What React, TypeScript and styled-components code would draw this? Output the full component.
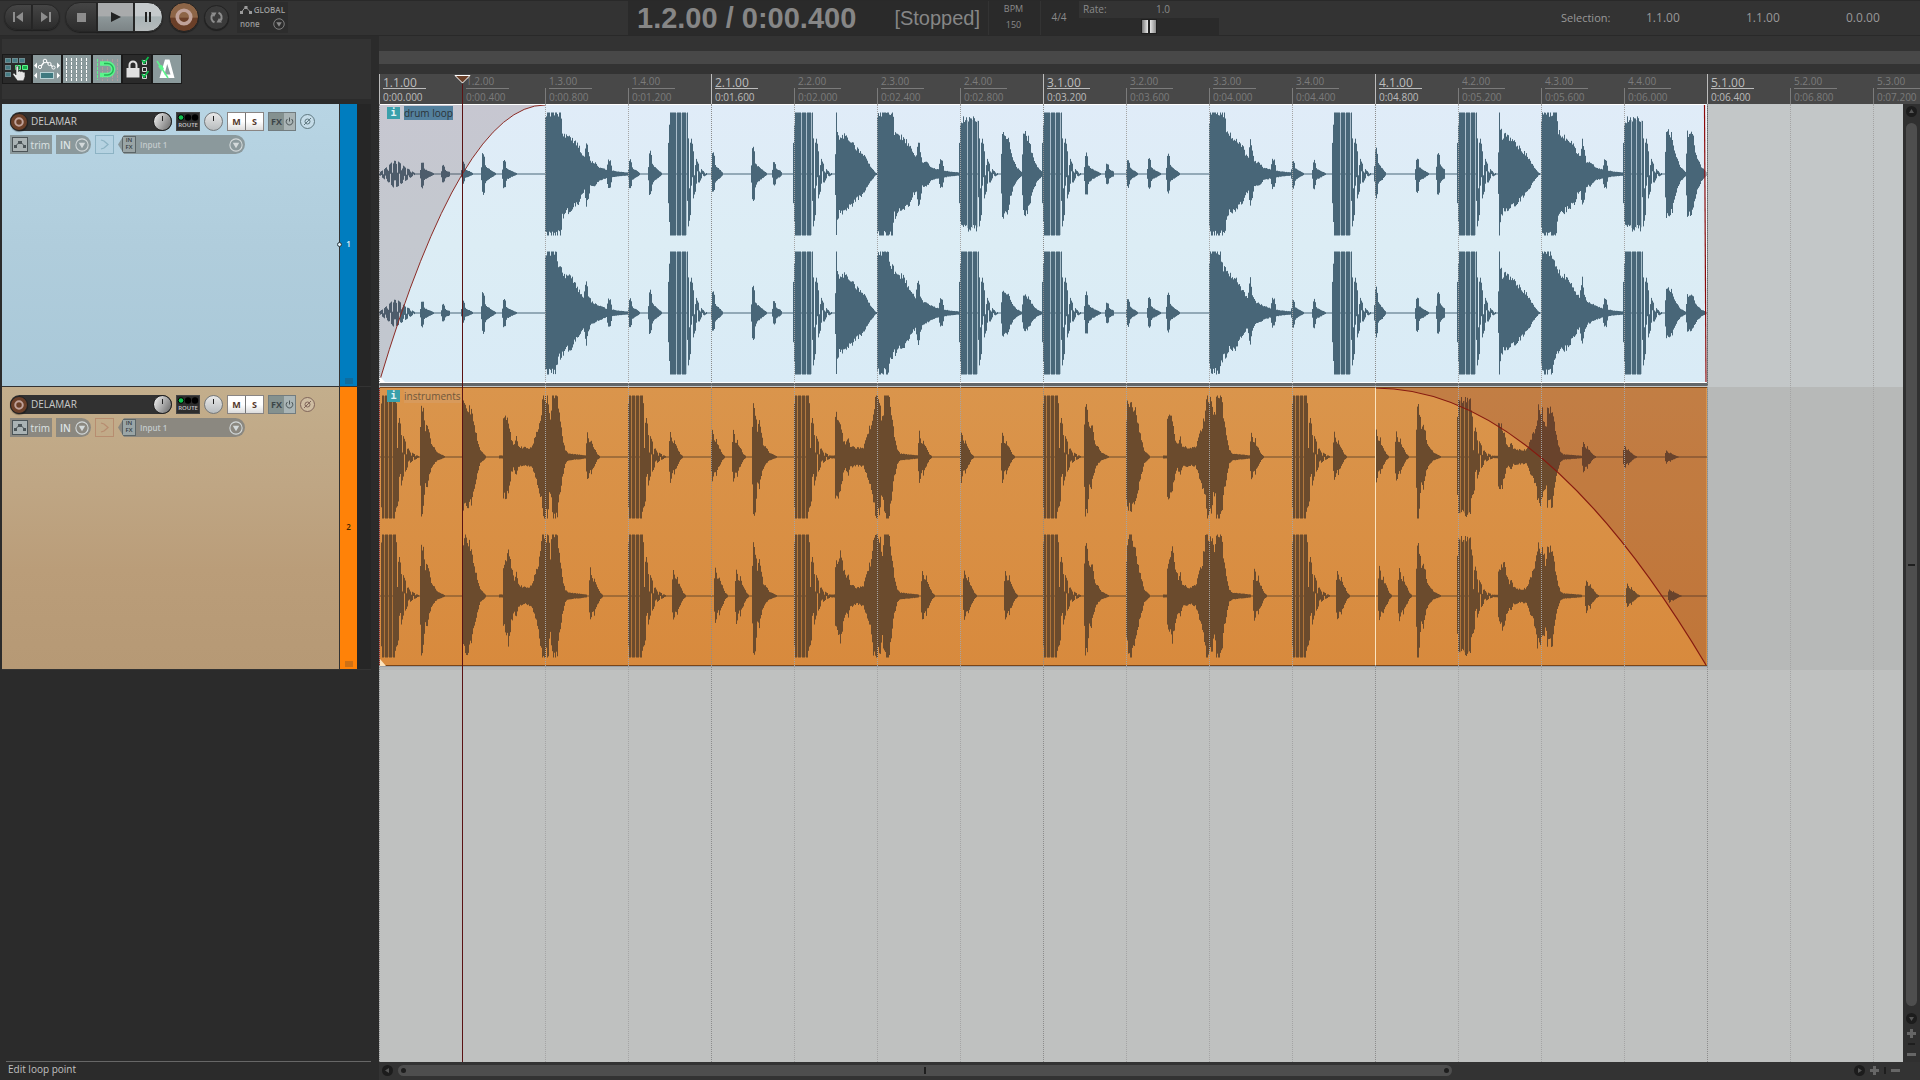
import React from "react";
import styled, { createGlobalStyle } from "styled-components";

const BEAT = 83;
const ITEM_BEATS = 16;
const ITEM_W = BEAT * ITEM_BEATS;
const ITEM_H = 279;
const LANE_H = 283;
const PEAK = 61;

const GlobalStyle = createGlobalStyle`
  *, *::before, *::after { box-sizing: border-box; }
  html, body { margin: 0; background: #2b2b2b; }
  body { font-family: "Open Sans", "Noto Sans", sans-serif; font-size: 10px; color: #b4b4b4; overflow: hidden; }
  button, input, select { font: inherit; color: inherit; margin: 0; padding: 0; border: 0; background: none; border-radius: 0; }
  svg { display: block; flex: none; }
`;

/* ---------- waveform data ---------- */

type Pt = [number, number];
type Osc = { period: number; peak: number; stripe?: { from: number; to: number; every: number; gap: number } };
type Hit = { x: number; up: Pt[]; dn: Pt[]; osc?: Osc; rough?: number };

const noise = (n: number) => {
  const v = Math.sin(n * 127.1 + 11.7) * 43758.5453;
  return v - Math.floor(v);
};

const lerp = (pts: Pt[], x: number) => {
  if (x < pts[0][0] || x > pts[pts.length - 1][0]) return 0;
  for (let i = 1; i < pts.length; i++) {
    const [x1, y1] = pts[i];
    const [x0, y0] = pts[i - 1];
    if (x <= x1) return y0 + ((y1 - y0) * (x - x0)) / (x1 - x0 || 1);
  }
  return 0;
};

const scale = (pts: Pt[], g: number): Pt[] => pts.map(([x, a]) => [x, a * g]);

const small = (x: number, u: number, d: number, w = 14): Hit => {
  const shape: Pt[] = [[0, 0.3], [1, 0.95], [2, 1], [3, 0.85], [4, 0.42], [5, 0.34], [8, 0.22], [w, 0]];
  return { x, up: scale(shape, u), dn: scale(shape, d) };
};

const warble = (): Hit => {
  const e: Pt[] = [[0, 1], [8, 7], [14, 13], [19, 12], [25, 7], [30, 4], [36, 0]];
  return { x: 0, up: e, dn: e, osc: { period: 4.6, peak: 15.5 } };
};

const kick = (x: number, start = 80): Hit => {
  const e: Pt[] = [[0, 30], [1, 48], [3, start], [17, start], [20, 52], [23, 35], [26, 20], [29, 12], [32, 6], [34, 3], [39, 0]];
  return { x, up: e, dn: e, osc: { period: 5.3, peak: 13, stripe: { from: 8, to: 19, every: 5, gap: 1 } } };
};

const crash = (x: number, alt: boolean): Hit => {
  const a: Pt[] = [[0, 56], [1, 64], [15, 63], [17, 42], [22, 38], [27, 34], [33, 29], [36, 20], [39, 17], [41, 33], [43, 24], [45, 12], [50, 11], [54, 6], [61, 4], [63, 14], [65, 13], [67, 3], [72, 2], [83, 1]];
  const b: Pt[] = [[0, 56], [1, 64], [10, 63], [14, 46], [20, 38], [26, 36], [33, 23], [38, 15], [41, 34], [43, 18], [46, 11], [54, 7], [61, 4], [63, 14], [65, 13], [67, 3], [72, 2], [83, 1]];
  return { x, up: alt ? b : a, dn: alt ? scale(b, 0.97) : a };
};

const snare = (x: number): Hit => {
  const e: Pt[] = [[0, 20], [1, 62], [2, 45], [4, 38], [9, 38], [14, 33], [20, 27], [28, 19], [34, 9], [40, 1], [42, 0]];
  return { x, up: e, dn: e };
};

const blob = (x: number, a: number): Hit => {
  const e: Pt[] = [[0, 0.5], [1, 0.95], [3, 1], [7, 0.85], [9, 0.55], [12, 0.32], [15, 0.16], [20, 0.04], [21, 0]];
  return { x, up: scale(e, a), dn: scale(e, a) };
};

const drums = (alt: boolean): Hit[] => [
  warble(),
  small(41, 12, 14), small(62, 8, 9, 9), small(82, 11, 9, 12), small(102, 20, 20, 15), small(123, 14, 14, 15),
  crash(166, alt), small(249, 14, 14, 12), small(269, 23, 22), kick(289),
  small(332, 20, 19, 12), small(372, 27, 29, 16), small(393, 12, 11, 10), kick(414),
  snare(456), crash(498, alt), kick(580, alt ? 80 : 54), blob(622, alt ? 22 : 42), blob(643, alt ? 17 : 40),
  kick(663), small(705, 20, 22, 17), small(726, 10, 10, 9), small(747, 13, 13, 12), small(768, 15, 15), small(787, 20, 18),
  crash(830, alt), small(912, 13, 14, 13), small(933, 13, 14), kick(953),
  small(995, 24, 24, 12), small(1036, 16, 18), small(1057, 21, 20, 9), kick(1078),
  snare(1119), crash(1162, alt), kick(1244, alt ? 80 : 54), blob(1286, alt ? 25 : 44), blob(1307, alt ? 18 : 42),
];

const bass = (x: number, g = 1): Hit => {
  const e: Pt[] = [[0, 52], [1, 75], [13, 75], [14, 58], [17, 44], [19, 33], [21, 23], [24, 15], [26, 10], [28, 6], [32, 3], [38, 0]];
  return {
    x, up: scale(e, g), dn: scale(e, g),
    osc: { period: 4.5, peak: 14, stripe: { from: 3, to: 15, every: 4, gap: 1 } },
  };
};

const pluck = (x: number, g: number, alt: boolean): Hit => {
  const e: Pt[] = [[0, 0.6], [1, 1], [2, 0.85], [3, 0.62], [4, 0.58], [5, 0.72], [6, 0.5], [8, 0.35], [11, 0.1], [14, 0]];
  return { x: x + (alt ? 3 : 0), up: scale(e, alt ? g * 1.1 : g), dn: scale(e, alt ? g * 1.05 : g) };
};

const stab = (x: number): Hit => ({
  x,
  up: [[0, 30], [1, 54], [3, 46], [5, 28], [7, 34], [9, 24], [11, 12], [14, 9], [17, 4], [25, 0]],
  dn: [[0, 30], [1, 62], [3, 52], [5, 28], [7, 30], [9, 18], [11, 11], [14, 6], [17, 3], [25, 0]],
});

const thump = (x: number, alt: boolean): Hit => {
  const a: Pt[] = [[0, 40], [1, 52], [6, 50], [9, 46], [12, 32], [15, 17], [18, 6], [24, 0]];
  const b: Pt[] = [[0, 38], [3, 64], [8, 50], [11, 34], [15, 17], [18, 6], [24, 0]];
  return { x, up: alt ? b : a, dn: alt ? b : a };
};

const swell = (x: number, g: number, alt: boolean): Hit => {
  const a: Pt[] = [[-4, 1], [-1, 1], [0, 42], [4, 40], [6, 30], [8, 17], [10, 12], [13, 19], [15, 10], [22, 9], [28, 9], [31, 18], [35, 32], [38, 44], [40, 64], [44, 62], [46, 42], [48, 44], [49, 66], [54, 66], [57, 34], [60, 16], [62, 7], [65, 3], [75, 2], [83, 1]];
  const b: Pt[] = [[-4, 1], [-1, 1], [0, 30], [3, 38], [5, 49], [8, 28], [11, 17], [13, 22], [15, 11], [22, 8], [28, 10], [31, 20], [35, 34], [39, 66], [45, 60], [47, 42], [49, 66], [54, 66], [57, 32], [60, 14], [62, 6], [65, 3], [75, 2], [83, 1]];
  const s = scale(alt ? b : a, g);
  return { x, up: s, dn: scale(s, 0.96), rough: 0.24 };
};

const instruments = (alt: boolean): Hit[] => [
  bass(2), stab(41), thump(83, alt), swell(124, 1, alt), pluck(207, 24, alt),
  bass(249), pluck(290, 24, alt), pluck(332, 25, alt), pluck(353, 25, alt), stab(373),
  bass(415), swell(456, 1, alt), pluck(539, 24, alt), pluck(581, 24, alt), pluck(622, 24, alt),
  bass(664), stab(705), thump(747, alt), swell(788, 1, alt), pluck(871, 24, alt),
  bass(913), pluck(954, 24, alt), pluck(996, 25, alt), pluck(1016, 25, alt), stab(1037),
  bass(1078, 0.75), swell(1119, 0.76, alt), pluck(1203, 15, alt), pluck(1244, 11, alt), pluck(1286, 6, alt),
];

const drawWave = (hits: Hit[], mid: number) => {
  const hi = new Array(ITEM_W).fill(0);
  const lo = new Array(ITEM_W).fill(0);
  let soft = "";
  const clip = (v: number) => Math.max(-PEAK, Math.min(PEAK, v));
  hits.forEach((h) => {
    const from = Math.max(0, h.x + h.up[0][0]);
    const to = Math.min(ITEM_W - 1, h.x + h.up[h.up.length - 1][0]);
    for (let i = from; i <= to; i++) {
      const dx = i - h.x;
      const u = lerp(h.up, dx);
      const d = lerp(h.dn, dx);
      if (h.osc) {
        const { period, peak, stripe } = h.osc;
        if (stripe && dx < stripe.to) {
          if (dx >= stripe.from && (dx - stripe.from) % stripe.every < stripe.gap) {
            hi[i] = 0;
            lo[i] = 0;
            soft += `M${i + 0.5} ${mid - clip(u)}V${mid + clip(d)}`;
          } else {
            hi[i] = clip(u * (0.92 + 0.14 * noise(dx)));
            lo[i] = -clip(d * (0.92 + 0.14 * noise(dx + 40)));
          }
          continue;
        }
        let a = -1;
        let b = 1;
        for (let k = -1; k <= 1; k += 0.25) {
          const s = Math.cos(((dx + k - peak) * Math.PI * 2) / period);
          a = Math.max(a, s);
          b = Math.min(b, s);
        }
        hi[i] = clip(a * u);
        lo[i] = clip(b * d);
      } else {
        const r = h.rough ?? 0.2;
        const j = (seed: number) => 1.08 - r + r * noise(i * 3 + seed);
        hi[i] = Math.max(hi[i], clip(u * j(1)));
        lo[i] = Math.min(lo[i], clip(-d * j(2)));
      }
    }
  });
  let path = "";
  for (let i = 0; i < ITEM_W; i++) {
    path += `M${i + 0.5} ${(mid - hi[i] - 0.5).toFixed(1)}V${(mid - lo[i] + 0.5).toFixed(1)}`;
  }
  return { path, soft };
};

const MIDS = [70, 209];
const buildItem = (make: (alt: boolean) => Hit[]) => MIDS.map((m, i) => drawWave(make(i === 1), m));
const DRUM_WAVES = buildItem(drums);
const INSTRUMENT_WAVES = buildItem(instruments);

/* ---------- page frame ---------- */

const Page = styled.div`
  height: 100vh;
  display: flex;
  flex-direction: column;
  background: #2b2b2b;
`;

const TopBar = styled.header`
  height: 36px;
  flex: none;
  display: flex;
  align-items: stretch;
  background: #333;
  border-top: 1px solid #292929;
  border-bottom: 1px solid #292929;
  color: #9a9a9a;
`;

const TopLeft = styled.div`
  width: 628px;
  display: flex;
  align-items: center;
  padding: 0 0 2px 4px;
`;

const Group = styled.div<{ $gap?: number; $ml?: number }>`
  display: flex;
  align-items: center;
  gap: ${(p) => p.$gap ?? 0}px;
  margin-left: ${(p) => p.$ml ?? 0}px;
`;

const shades = {
  dark: "linear-gradient(#454545, #2c2c2c)",
  light: "linear-gradient(#a9abac 0 45%, #8d9799 50%, #7c8486)",
  pale: "linear-gradient(#c6cacc 0 45%, #a9b4b6 50%, #b6bbbc)",
};

const TransportButton = styled.button<{ $w: number; $tone: keyof typeof shades; $round?: string; $low?: boolean }>`
  width: ${(p) => p.$w}px;
  height: ${(p) => (p.$low ? 26 : 30)}px;
  display: flex;
  align-items: center;
  justify-content: center;
  background: ${(p) => shades[p.$tone]};
  border: 1px solid #262626;
  border-radius: ${(p) => p.$round ?? "0"};
  box-shadow: 0 1px 1px #1e1e1e;
`;

const CircleButton = styled.button<{ $d: number; $bg: string }>`
  width: ${(p) => p.$d}px;
  height: ${(p) => p.$d}px;
  flex: none;
  display: flex;
  align-items: center;
  justify-content: center;
  border-radius: 50%;
  background: ${(p) => p.$bg};
  border: 1px solid #222;
  box-shadow: 0 1px 1px rgba(0, 0, 0, 0.4);
`;

const GlobalBox = styled.div`
  width: 51px;
  height: 31px;
  margin-left: 8px;
  padding: 0 3px 0 3px;
  background: #2d2d2d;
  display: flex;
  flex-direction: column;
  justify-content: space-evenly;
  color: #9a9a9a;
`;

const GlobalRow = styled.label`
  display: flex;
  align-items: center;
  justify-content: space-between;
  font-size: 8px;
  line-height: 12px;
  font-weight: 600;
`;

const PlainSelect = styled.select`
  appearance: none;
  flex: 1;
  min-width: 0;
  outline: none;
`;

const Display = styled.section`
  display: flex;
  background: #2a2a2a;
`;

const TimeReadout = styled.div`
  width: 360px;
  display: flex;
  align-items: center;
  justify-content: space-between;
  padding: 0 8px 1px 9px;
  font-family: "Liberation Sans", Arial, sans-serif;
  color: #868686;
  white-space: nowrap;
`;

const TimeText = styled.strong`
  font-size: 29px;
  line-height: 32px;
`;

const StatusText = styled.span`
  font-size: 20px;
  line-height: 32px;
`;

const Cell = styled.div<{ $w: number; $size?: number }>`
  width: ${(p) => p.$w}px;
  display: flex;
  flex-direction: column;
  align-items: center;
  justify-content: space-evenly;
  border-left: 1px solid #333;
  padding: 0 2px 2px 0;
  font-size: ${(p) => p.$size ?? 9}px;
  line-height: 14px;
  color: #8a8a8a;
`;

const RateBox = styled.label`
  width: 140px;
  display: flex;
  flex-direction: column;
  color: #8a8a8a;
`;

const RateHead = styled.span`
  height: 17px;
  padding: 0 49px 0 4px;
  display: flex;
  justify-content: space-between;
  line-height: 17px;
  background: #333;
`;

const RateSlider = styled.input`
  appearance: none;
  width: 100%;
  height: 17px;
  background: #2a2a2a;
  &::-webkit-slider-thumb {
    appearance: none;
    width: 16px;
    height: 15px;
    border: 1px solid #1f1f1f;
    background: linear-gradient(90deg, #777, #e4e4e4 40%, #222 46% 54%, #e4e4e4 58%, #8a8a8a);
  }
`;

const Selection = styled.div`
  margin-left: auto;
  display: flex;
  align-items: center;
  padding: 0 40px 2px 0;
  color: #999;
  font-size: 12px;
`;

const SelLabel = styled.span`
  font-size: 11px;
  width: 85px;
`;

const SelValue = styled.span`
  width: 100px;
  &:last-child { width: 34px; }
`;

const Main = styled.main`
  flex: 1;
  min-height: 0;
  display: grid;
  grid-template-columns: 371px minmax(0, 1fr);
  column-gap: 8px;
`;

/* ---------- left column ---------- */

const LeftColumn = styled.aside`
  display: flex;
  flex-direction: column;
  padding-top: 3px;
  padding-left: 2px;
`;

const ToolPanel = styled.div`
  height: 60px;
  margin-bottom: 5px;
  display: flex;
  align-items: center;
  background: #333;
`;

const ToolButton = styled.button<{ $on?: boolean }>`
  width: 30px;
  height: 30px;
  display: flex;
  align-items: center;
  justify-content: center;
  background: ${(p) => (p.$on ? "#8b9a9c" : "#2a2a2a")};
  border: 1px solid #1a1a1a;
`;

const TrackRow = styled.section`
  position: relative;
  height: ${LANE_H}px;
  display: flex;
  border-bottom: 1px solid #333;
  background: #262626;
`;

const TrackBody = styled.div<{ $bg: string }>`
  width: 338px;
  padding: 8px 8px 0;
  display: flex;
  flex-direction: column;
  gap: 4px;
  background: ${(p) => p.$bg};
  border-right: 1px solid #333;
`;

const ControlRow = styled.div`
  height: 19px;
  display: flex;
  align-items: center;
  gap: 4px;
`;

const NameBox = styled.div`
  width: 162px;
  height: 19px;
  display: flex;
  align-items: center;
  background: #313131;
  border-radius: 10px;
`;

const NameInput = styled.input`
  flex: 1;
  min-width: 0;
  padding: 0 0 2px 3px;
  line-height: 16px;
  color: #c9c9c9;
  outline: none;
`;

const Knob = styled.input<{ $pale?: boolean }>`
  appearance: none;
  width: 19px;
  height: 19px;
  flex: none;
  border-radius: 50%;
  border: 1px solid ${(p) => (p.$pale ? "#74787a" : "#222")};
  background:
    linear-gradient(#222, #222) center 3px / 1px 5px no-repeat,
    ${(p) => (p.$pale ? "linear-gradient(#e8e8e8, #b8bcbe)" : "linear-gradient(120deg, #f4f4f4, #666)")};
  &::-webkit-slider-thumb { appearance: none; width: 0; height: 0; }
`;

const RouteButton = styled.button`
  width: 24px;
  height: 19px;
  background: #2d2d2d;
  border: 1px solid #444;
  display: flex;
  flex-direction: column;
  align-items: center;
  font-size: 6px;
  line-height: 9px;
  font-weight: 600;
  color: #c5c5c5;
`;

const Pair = styled.div<{ $edge: string }>`
  display: flex;
  height: 19px;
  border: 1px solid ${(p) => p.$edge};
`;

const MuteSolo = styled.button`
  width: 17px;
  background: linear-gradient(#fff 50%, #dcdcdc);
  color: #55392c;
  font-size: 9px;
  line-height: 16px;
  font-weight: 700;
  text-align: center;
  & + & { width: 18px; border-left: 1px solid #777; }
`;

const FxButton = styled.button<{ $w: number; $bg: string }>`
  width: ${(p) => p.$w}px;
  background: ${(p) => p.$bg};
  color: #3c4649;
  font-size: 9px;
  font-weight: 700;
  line-height: 16px;
  display: flex;
  align-items: center;
  justify-content: center;
`;

const PhaseButton = styled.button<{ $edge: string }>`
  width: 15px;
  height: 15px;
  display: flex;
  align-items: center;
  justify-content: center;
  border-radius: 50%;
  border: 1px solid ${(p) => p.$edge};
  background: rgba(255, 255, 255, 0.2);
  color: ${(p) => p.$edge};
`;

const Pill = styled.button<{ $w: number; $bg: string; $round?: boolean }>`
  width: ${(p) => p.$w}px;
  height: 19px;
  display: flex;
  align-items: center;
  justify-content: space-between;
  background: ${(p) => p.$bg};
  border-radius: ${(p) => (p.$round ? "0 10px 10px 0" : "0")};
  color: #dde3e4;
  line-height: 16px;
  font-weight: ${(p) => (p.$round ? 600 : 400)};
  padding: ${(p) => (p.$round ? "0 2px 0 4px" : "0 2px")};
`;

const PanButton = styled.button<{ $edge: string }>`
  width: 19px;
  height: 19px;
  border: 1px solid ${(p) => p.$edge};
  color: ${(p) => p.$edge};
  display: flex;
  align-items: center;
  justify-content: center;
`;

const InputPill = styled.label<{ $bg: string }>`
  width: 127px;
  height: 19px;
  display: flex;
  align-items: center;
  background: ${(p) => p.$bg};
  border-radius: 0 10px 10px 0;
  clip-path: polygon(6px 0, 100% 0, 100% 100%, 6px 100%, 0 50%);
  padding: 0 2px 0 4px;
  gap: 4px;
  color: #c3cbcc;
  font-size: 8px;
  font-weight: 600;
`;

const InFx = styled.span`
  width: 14px;
  height: 17px;
  display: flex;
  flex-direction: column;
  align-items: center;
  background: #9aa5a6;
  border: 1px solid #5c6668;
  font-size: 6px;
  line-height: 7px;
  color: #333c3f;
`;

const TrackStrip = styled.div<{ $bg: string; $ink: string }>`
  width: 17px;
  padding-bottom: 2px;
  background: ${(p) => p.$bg};
  color: ${(p) => p.$ink};
  font-size: 8px;
  font-weight: 600;
  line-height: 12px;
  display: grid;
  grid-template-rows: 1fr auto 1fr;
  justify-items: center;
`;

const SelectedDot = styled.span`
  position: absolute;
  left: 335px;
  top: 138px;
  width: 5px;
  height: 5px;
  border-radius: 50%;
  border: 1px solid #2b3a42;
  background: #dfeef5;
`;

const StripFoot = styled.span`
  width: 8px;
  height: 6px;
  align-self: end;
  background: rgba(60, 60, 60, 0.25);
`;

const StatusBar = styled.footer`
  margin-top: auto;
  margin-left: 4px;
  height: 19px;
  padding: 0 2px;
  border-top: 1px solid #676767;
  line-height: 14px;
  color: #c0c0c0;
`;

/* ---------- arrange view ---------- */

const Arrange = styled.div`
  min-width: 0;
  display: grid;
  grid-template-columns: minmax(0, 1fr) 17px;
  grid-template-rows: 15px 13px 10px 30px minmax(0, 1fr) 18px;
  background: #333;
  position: relative;
`;

const LoopBar = styled.div`
  grid-row: 2;
  grid-column: 1 / 3;
  background: #484848;
`;

const Ruler = styled.div`
  grid-row: 4;
  grid-column: 1 / 3;
  display: flex;
  background: #484848;
`;

const Mark = styled.div<{ $main: boolean }>`
  flex: 0 0 ${BEAT}px;
  height: 30px;
  padding-left: 4px;
  color: ${(p) => (p.$main ? "#bcbcbc" : "#7b7b7b")};
  background: linear-gradient(currentColor, currentColor) left bottom / 1px ${(p) => (p.$main ? 30 : 16)}px no-repeat;
  &:last-child { flex: 1 0 47px; }
`;

const MarkBar = styled.div<{ $main: boolean }>`
  width: 43px;
  height: 15px;
  font-size: ${(p) => (p.$main ? 12 : 10)}px;
  line-height: ${(p) => (p.$main ? 18 : 14)}px;
  border-bottom: 1px solid currentColor;
`;

const MarkTime = styled.div`
  padding-top: 1px;
  font-size: 10px;
  line-height: 14px;
`;

const Canvas = styled.div`
  grid-row: 5;
  grid-column: 1;
  position: relative;
  overflow: hidden;
  background: #bfc1c0;
`;

const Lane = styled.div<{ $bg: string }>`
  height: ${LANE_H}px;
  background: ${(p) => p.$bg};
`;

const Item = styled.article<{ $blue?: boolean }>`
  position: relative;
  width: ${ITEM_W}px;
  height: ${(p) => (p.$blue ? 281 : 279)}px;
  border-bottom: ${(p) => (p.$blue ? "2px solid #63676a" : "0")};
  box-shadow: ${(p) => (p.$blue ? "1px 1px 0 #63676a" : "1px 1px 0 #9aa0a6")};
`;

const ItemTag = styled.div`
  position: absolute;
  left: 8px;
  top: 2px;
  display: flex;
  align-items: center;
  gap: 4px;
`;

const InfoButton = styled.button`
  width: 13px;
  height: 12px;
  background: #3aa0ab;
  color: #e3f3f5;
  font-family: "DejaVu Sans Mono", monospace;
  font-size: 10px;
  font-weight: 700;
  line-height: 12px;
`;

const ItemName = styled.span<{ $sel?: boolean }>`
  line-height: 14px;
  color: ${(p) => (p.$sel ? "#2b3338" : "#6f573c")};
  background: ${(p) => (p.$sel ? "#53809d" : "rgba(215, 155, 95, 0.8)")};
`;

const GridOverlay = styled.div`
  position: absolute;
  inset: 0;
  display: flex;
  pointer-events: none;
`;

const GridLine = styled.div<{ $main: boolean }>`
  flex: 0 0 ${BEAT}px;
  border-left: 1px dotted ${(p) => (p.$main ? "#8c8c8c" : "#a4a4a4")};
`;

const FadeEdge = styled.div`
  position: absolute;
  left: ${BEAT * 12}px;
  top: ${LANE_H + 1}px;
  width: 1px;
  height: 277px;
  background: #fbe3bd;
`;

const Cursor = styled.div`
  position: absolute;
  top: 39px;
  bottom: 18px;
  left: ${BEAT - 8}px;
  width: 17px;
  display: flex;
  flex-direction: column;
  align-items: center;
  pointer-events: none;
`;

const CursorLine = styled.div`
  flex: 1;
  width: 1px;
  background: #5a1213;
`;

const VScroll = styled.div`
  grid-row: 5;
  grid-column: 2;
  display: flex;
  flex-direction: column;
  align-items: center;
  padding: 2px 0 2px;
  gap: 4px;
  background: #303030;
`;

const HScroll = styled.div`
  grid-row: 6;
  grid-column: 1;
  display: flex;
  align-items: center;
  padding: 0 2px 2px 3px;
  gap: 4px;
`;

const ScrollTrack = styled.div<{ $v?: boolean }>`
  flex: 1;
  display: flex;
  flex-direction: ${(p) => (p.$v ? "column" : "row")};
  margin: ${(p) => (p.$v ? "2px 0 3px" : "0 8px 0 1px")};
`;

const ScrollThumb = styled.div<{ $v?: boolean; $part: number }>`
  flex: 0 0 ${(p) => p.$part}%;
  ${(p) => (p.$v ? "width: 11px;" : "height: 11px;")}
  border-radius: 6px;
  background: #4e4e4e;
  display: flex;
  align-items: center;
  justify-content: ${(p) => (p.$v ? "center" : "space-between")};
  padding: ${(p) => (p.$v ? "0" : "0 3px")};
`;

const Dot = styled.span`
  width: 5px;
  height: 5px;
  border-radius: 50%;
  background: #1e1e1e;
`;

const Notch = styled.span<{ $v?: boolean }>`
  width: ${(p) => (p.$v ? 7 : 2)}px;
  height: ${(p) => (p.$v ? 2 : 7)}px;
  background: #1e1e1e;
`;

const ScrollButton = styled.button`
  width: 11px;
  height: 11px;
  flex: none;
  display: flex;
  align-items: center;
  justify-content: center;
`;

/* ---------- icons ---------- */

const Caret = ({ color, size = 13 }: { color: string; size?: number }) => (
  <svg width={size} height={size} viewBox="0 0 13 13">
    <circle cx="6.5" cy="6.5" r="5.7" fill="none" stroke={color} />
    <path d="M3.5 4.5h6l-3 5z" fill={color} />
  </svg>
);

const Arrow = ({ turn }: { turn: number }) => (
  <svg width="11" height="11" viewBox="0 0 11 11">
    <circle cx="5.5" cy="5.5" r="5.5" fill="#1c1c1c" />
    <path d="M4 3l4 2.5-4 2.5z" fill="#555" transform={`rotate(${turn} 5.5 5.5)`} />
  </svg>
);

const Plus = () => (
  <svg width="9" height="9" viewBox="0 0 9 9"><path d="M3 0h3v3h3v3H6v3H3V6H0V3h3z" fill="#666" /></svg>
);
const Minus = () => (
  <svg width="9" height="3" viewBox="0 0 9 3"><path d="M0 0h9v3H0z" fill="#666" /></svg>
);

const Ring = ({ d }: { d: number }) => (
  <svg width={d} height={d} viewBox="0 0 16 16">
    <circle cx="8" cy="8" r="6" fill="none" stroke="#c0a29a" strokeWidth="3.2" />
  </svg>
);

const tools = [
  {
    name: "Item grouping", on: false, art: (
      <>
        {[[2.5, 3.5], [9.5, 3.5], [16.5, 3.5], [2.5, 10.5], [2.5, 17.5]].map(([x, y]) => (
          <rect key={`${x}-${y}`} x={x} y={y} width="5" height="4" fill="#467c84" stroke="#6d8c92" />
        ))}
        <path d="M12.500 10.500h5v4h-5zM19.500 10.500h5v4h-5z" fill="#18b04a" stroke="#5cf58c" />
        <path d="M13 12c0-1.500 2.500-1.500 2.500 0v4.500c1-1 2-.6 2.300.3 1-.8 2-.4 2.200.5 1-.6 2 0 2 1v3.500l-1.500 4h-6l-4.500-6c-.6-1.300 1-2 2-1l1 1.200z" fill="#e6e6e6" stroke="#2a2a2a" strokeWidth=".6" />
      </>
    ),
  },
  {
    name: "Envelopes move with items", on: true, art: (
      <>
        <path d="M7 12.500L12 6 16.500 9 20.500 12.500" fill="none" stroke="#fff" strokeWidth="1.300" />
        <circle cx="7" cy="12" r="1.600" fill="#8b9a9c" stroke="#fff" />
        <circle cx="12" cy="6" r="1.800" fill="#8b9a9c" stroke="#fff" />
        <circle cx="16.500" cy="9" r="1.600" fill="#8b9a9c" stroke="#fff" />
        <circle cx="20.500" cy="12.500" r="1.600" fill="#8b9a9c" stroke="#fff" />
        <path d="M4 7.500v6L1 10.500zM24 7.500v6l3-3zM4 17.500v6l-3-3zM24 17.500v6l3-3z" fill="#fff" />
        <rect x="7.500" y="17.500" width="13" height="6" fill="#3f7a80" stroke="#b9d3d6" />
      </>
    ),
  },
  {
    name: "Grid lines", on: true, art: (
      <path d="M3.500 3v23M8.500 3v23M13.500 3v23M18.500 3v23M23.500 3v23" stroke="#fff" strokeDasharray="3 1" />
    ),
  },
  {
    name: "Snapping", on: true, art: (
      <>
        <path d="M4.500 4v21" stroke="#5cf58c" strokeDasharray="3 1" />
        <path d="M9.500 4v22M14.500 4v22M19.500 4v22M24.500 4v22" stroke="#b39b9b" strokeDasharray="3 1" />
        <path d="M7 8.500h7.500a5.500 5.500 0 0 1 0 11.500H7" fill="none" stroke="#5cf58c" strokeWidth="4.500" />
        <path d="M11 8.500h3.500a5.500 5.500 0 0 1 0 11.500H11" fill="none" stroke="#25b556" strokeWidth="1.500" />
      </>
    ),
  },
  {
    name: "Locking", on: false, art: (
      <>
        <path d="M6.500 14V10a3.500 3.500 0 0 1 7 0v4" fill="none" stroke="#e0e0e0" strokeWidth="2" />
        <rect x="3.500" y="13" width="13" height="9.500" fill="#e0e0e0" />
        <path d="M19.500 5.500h4v4h-4zM19.500 12.500h4v4h-4zM19.500 19.500h4v4h-4z" fill="none" stroke="#d6d6d6" />
        <path d="M19 5l2 3 4.500-6M19 19l2 3 4.500-6" fill="none" stroke="#10c04e" strokeWidth="1.600" />
      </>
    ),
  },
  {
    name: "Metronome", on: true, art: (
      <>
        <path fillRule="evenodd" d="M12 4.500h4.500l5 18.500H6.500zM14.200 9l-2.700 10.500h6z" fill="#fff" />
        <path d="M4 6l11 17" stroke="#5cf58c" strokeWidth="1.500" />
        <path d="M5 11l4-1 2 4-3 1.500z" fill="#5cf58c" />
      </>
    ),
  },
];

/* ---------- parts ---------- */

type TrackTheme = { bg: string; pill: string; edge: string; pan: string; strip: string; ink: string };

const TRACKS: TrackTheme[] = [
  { bg: "linear-gradient(#b8d5e4, #b0cddc 50%, #a9c8d8)", pill: "#8b999c", edge: "#5f7880", pan: "#8db3c4", strip: "#007dbf", ink: "#e6f2f8" },
  { bg: "linear-gradient(#c3ae8c, #bfa684 35%, #ba9d79 65%, #b69975)", pill: "#8b8880", edge: "#80655a", pan: "#b78d70", strip: "#ff8208", ink: "#3d2400" },
];

const TrackPanel = ({ t, n }: { t: TrackTheme; n: number }) => (
  <TrackRow>
    <TrackBody $bg={t.bg}>
      <ControlRow>
        <NameBox>
          <CircleButton $d={18} $bg="#6b4029" aria-label="Record arm"><Ring d={10} /></CircleButton>
          <NameInput aria-label={`Track ${n} name`} defaultValue="DELAMAR" />
          <Knob type="range" aria-label="Volume" />
        </NameBox>
        <RouteButton>
          <svg width="22" height="8" viewBox="0 0 22 8">
            <circle cx="4" cy="4.500" r="2.800" fill="#10c04e" stroke="#000" />
            <circle cx="11" cy="4.500" r="3.200" fill="#000" />
            <circle cx="18" cy="4.500" r="3.200" fill="#000" />
          </svg>
          ROUTE
        </RouteButton>
        <Knob type="range" $pale aria-label="Pan" />
        <Pair $edge="#8a8583">
          <MuteSolo>M</MuteSolo>
          <MuteSolo>S</MuteSolo>
        </Pair>
        <Pair $edge="#727c7f">
          <FxButton $w={15} $bg="#84918f">FX</FxButton>
          <FxButton $w={11} $bg="#a9b4b5" aria-label="Bypass effects">
            <svg width="9" height="9" viewBox="0 0 9 9">
              <path d="M2.500 2a3.300 3.300 0 1 0 4 0M4.500 .5v4" fill="none" stroke="#4b5557" />
            </svg>
          </FxButton>
        </Pair>
        <PhaseButton $edge={t.edge} aria-label="Phase">
          <svg width="9" height="9" viewBox="0 0 9 9">
            <circle cx="4.500" cy="4.500" r="2.500" fill="none" stroke="currentColor" />
            <path d="M1 8l7-7" stroke="currentColor" />
          </svg>
        </PhaseButton>
      </ControlRow>
      <ControlRow>
        <Pill $w={42} $bg={t.pill}>
          <svg width="16" height="15" viewBox="0 0 16 15">
            <rect x=".5" y=".5" width="15" height="14" fill="#aab3b4" stroke="#4c5558" />
            <path d="M3 9.500l4-4h2l4 4" fill="none" stroke="#4c5558" />
            <path d="M6 4h4v3H6zM2 8h3v3H2zM11 8h3v3h-3z" fill="#4c5558" />
          </svg>
          trim
        </Pill>
        <Pill $w={35} $bg={t.pill} $round>IN<Caret color="#d3d9da" size={14} /></Pill>
        <PanButton $edge={t.pan} aria-label="Input channel">
          <svg width="11" height="11" viewBox="0 0 11 11">
            <path d="M2 1l3 1 4 3.500-4 3.500-3 1" fill="none" stroke="currentColor" strokeWidth="1.300" />
          </svg>
        </PanButton>
        <InputPill $bg={t.pill}>
          <InFx><span>IN</span><span>FX</span></InFx>
          <PlainSelect aria-label="Record input"><option>Input 1</option></PlainSelect>
          <Caret color="#d3d9da" size={14} />
        </InputPill>
      </ControlRow>
    </TrackBody>
    <TrackStrip $bg={t.strip} $ink={t.ink}><span /><span>{n}</span><StripFoot /></TrackStrip>
    {n === 1 && <SelectedDot />}
  </TrackRow>
);

const DrumItem = () => (
  <Item $blue>
    <svg width={ITEM_W} height={ITEM_H} viewBox={`0 0 ${ITEM_W} ${ITEM_H}`}>
      <defs>
        <linearGradient id="sky" x1="0" y1="0" x2="0" y2="1">
          <stop offset="0" stopColor="#e0ecf8" />
          <stop offset=".5" stopColor="#dcedf5" />
          <stop offset="1" stopColor="#d9ebf6" />
        </linearGradient>
      </defs>
      <rect width={ITEM_W} height={ITEM_H} fill="url(#sky)" />
      {DRUM_WAVES.map((w, i) => (
        <g key={i} stroke="#486678">
          <path d={w.soft} strokeOpacity=".35" />
          <path d={w.path} />
        </g>
      ))}
      <path d="M0 279Q83 1 166 1H0z" fill="rgb(100,55,55)" fillOpacity=".2" />
      <path d="M0 279Q83 1 166 1" fill="none" stroke="#8b2a24" />
      <path d="M0 .5H1327V278.500H0" fill="none" stroke="#fff" />
      <path d="M1325.500 1L1327 278" stroke="#8b0a0a" strokeWidth="1.200" />
      <path d="M0 279v-7l7 7z" fill="#fff" />
    </svg>
    <ItemTag><InfoButton>i</InfoButton><ItemName $sel>drum loop</ItemName></ItemTag>
  </Item>
);

const InstrumentItem = () => (
  <Item>
    <svg width={ITEM_W} height={ITEM_H} viewBox={`0 0 ${ITEM_W} ${ITEM_H}`}>
      <defs>
        <linearGradient id="amber" x1="0" y1="0" x2="0" y2="1">
          <stop offset="0" stopColor="#da954c" />
          <stop offset="1" stopColor="#d88a3d" />
        </linearGradient>
      </defs>
      <rect width={ITEM_W} height={ITEM_H} fill="url(#amber)" />
      {INSTRUMENT_WAVES.map((w, i) => (
        <g key={i} stroke="#6b4b2d">
          <path d={w.soft} strokeOpacity=".35" />
          <path d={w.path} />
        </g>
      ))}
      <path d="M996 1Q1162 1 1327 278V1z" fill="rgb(100,36,42)" fillOpacity=".2" />
      <path d="M996 1Q1162 1 1327 278" fill="none" stroke="#861a10" strokeWidth="1.200" />
      <path d="M0 .5H1328M0 278.500H1328" stroke="#7a4517" />
      <path d="M.5 1V278" stroke="#a01c10" />
      <path d="M1 279v-7l6 7z" fill="#fbe3bd" />
    </svg>
    <ItemTag><InfoButton>i</InfoButton><ItemName>instruments</ItemName></ItemTag>
  </Item>
);

const marks = Array.from({ length: 19 }, (_, i) => ({
  main: i % 4 === 0,
  bar: `${Math.floor(i / 4) + 1}.${(i % 4) + 1}.00`,
  time: `0:${(i * 0.4).toFixed(3).padStart(6, "0")}`,
}));

export default function App() {
  return (
    <Page>
      <GlobalStyle />
      <TopBar>
        <TopLeft>
          <Group>
            <TransportButton $w={28} $tone="dark" $low $round="14px 0 0 14px" aria-label="Go to start">
              <svg width="10" height="10" viewBox="0 0 10 10"><path d="M0 0h2v10H0zM10 0v10L3 5z" fill="#8d8d8d" /></svg>
            </TransportButton>
            <TransportButton $w={28} $tone="dark" $low $round="0 14px 14px 0" aria-label="Go to end">
              <svg width="10" height="10" viewBox="0 0 10 10"><path d="M8 0h2v10H8zM0 0v10l7-5z" fill="#8d8d8d" /></svg>
            </TransportButton>
          </Group>
          <Group $ml={5}>
            <TransportButton $w={32} $tone="dark" $round="15px 0 0 15px" aria-label="Stop">
              <svg width="9" height="9" viewBox="0 0 9 9"><path d="M0 0h9v9H0z" fill="#8d8d8d" /></svg>
            </TransportButton>
            <TransportButton $w={37} $tone="light" aria-label="Play">
              <svg width="10" height="10" viewBox="0 0 10 10"><path d="M0 0v10l10-5z" fill="#222" /></svg>
            </TransportButton>
            <TransportButton $w={29} $tone="pale" $round="0 15px 15px 0" aria-label="Pause">
              <svg width="7" height="10" viewBox="0 0 7 10"><path d="M0 0h2v10H0zM4 0h2v10H4z" fill="#222" /></svg>
            </TransportButton>
          </Group>
          <Group $gap={5} $ml={6}>
            <CircleButton $d={30} $bg="linear-gradient(#8d6547 0 50%, #6b3f28 55%)" aria-label="Record"><Ring d={18} /></CircleButton>
            <CircleButton $d={25} $bg="#3a3a3a" aria-label="Repeat">
              <svg width="15" height="15" viewBox="0 0 15 15">
                <path d="M5.500 12.300A5 5 0 0 1 3.500 4.500M9.500 2.700a5 5 0 0 1 2 7.800" fill="none" stroke="#8d8d8d" strokeWidth="2" />
                <path d="M2 2.500h5.500L5 7zM13 12.500H7.500L10 8z" fill="#8d8d8d" />
              </svg>
            </CircleButton>
          </Group>
          <GlobalBox>
            <GlobalRow as="div">
              <svg width="13" height="9" viewBox="0 0 13 9">
                <path d="M1.500 7l4-5 5 5" fill="none" stroke="#9a9a9a" />
                <path d="M0 6h3v3H0zM4.500 1h3v3h-3zM9 6h3v3H9z" fill="#9a9a9a" />
              </svg>
              GLOBAL
            </GlobalRow>
            <GlobalRow>
              <PlainSelect aria-label="Global automation"><option>none</option></PlainSelect>
              <Caret color="#888" size={12} />
            </GlobalRow>
          </GlobalBox>
        </TopLeft>
        <Display>
          <TimeReadout>
            <TimeText>1.2.00 / 0:00.400</TimeText>
            <StatusText>[Stopped]</StatusText>
          </TimeReadout>
          <Cell $w={52}><span>BPM</span><span>150</span></Cell>
          <Cell $w={39} $size={10}>4/4</Cell>
          <RateBox>
            <RateHead><span>Rate:</span><span>1.0</span></RateHead>
            <RateSlider type="range" min={0} max={2} step={0.1} defaultValue={1} />
          </RateBox>
        </Display>
        <Selection>
          <SelLabel>Selection:</SelLabel>
          <SelValue>1.1.00</SelValue>
          <SelValue>1.1.00</SelValue>
          <SelValue>0.0.00</SelValue>
        </Selection>
      </TopBar>
      <Main>
        <LeftColumn>
          <ToolPanel>
            {tools.map((t) => (
              <ToolButton key={t.name} $on={t.on} aria-label={t.name}>
                <svg width="28" height="28" viewBox="0 0 28 28">{t.art}</svg>
              </ToolButton>
            ))}
          </ToolPanel>
          {TRACKS.map((t, i) => <TrackPanel key={i} t={t} n={i + 1} />)}
          <StatusBar>Edit loop point</StatusBar>
        </LeftColumn>
        <Arrange>
          <LoopBar />
          <Ruler>
            {marks.map((m) => (
              <Mark key={m.bar} $main={m.main}>
                <MarkBar $main={m.main}>{m.bar}</MarkBar>
                <MarkTime>{m.time}</MarkTime>
              </Mark>
            ))}
          </Ruler>
          <Canvas>
            <Lane $bg="#c3c7c8"><DrumItem /></Lane>
            <Lane $bg="#b7b9b8"><InstrumentItem /></Lane>
            <GridOverlay>{marks.map((m) => <GridLine key={m.bar} $main={m.main} />)}</GridOverlay>
            <FadeEdge />
          </Canvas>
          <VScroll>
            <ScrollButton aria-label="Scroll up"><Arrow turn={-90} /></ScrollButton>
            <ScrollTrack $v>
              <ScrollThumb $v $part={100}><Notch $v /></ScrollThumb>
            </ScrollTrack>
            <ScrollButton aria-label="Scroll down"><Arrow turn={90} /></ScrollButton>
            <ScrollButton aria-label="Zoom in tracks"><Plus /></ScrollButton>
            <Notch $v />
            <ScrollButton aria-label="Zoom out tracks"><Minus /></ScrollButton>
          </VScroll>
          <HScroll>
            <ScrollButton aria-label="Scroll left"><Arrow turn={180} /></ScrollButton>
            <ScrollTrack>
              <ScrollThumb $part={73}><Dot /><Notch /><Dot /></ScrollThumb>
            </ScrollTrack>
            <ScrollButton aria-label="Scroll right"><Arrow turn={0} /></ScrollButton>
            <ScrollButton aria-label="Zoom in time"><Plus /></ScrollButton>
            <Notch />
            <ScrollButton aria-label="Zoom out time"><Minus /></ScrollButton>
          </HScroll>
          <Cursor>
            <svg width="17" height="9" viewBox="0 0 17 9"><path d="M1 .5h15L8.500 8z" fill="#6b4029" stroke="#fff" /></svg>
            <CursorLine />
          </Cursor>
        </Arrange>
      </Main>
    </Page>
  );
}
